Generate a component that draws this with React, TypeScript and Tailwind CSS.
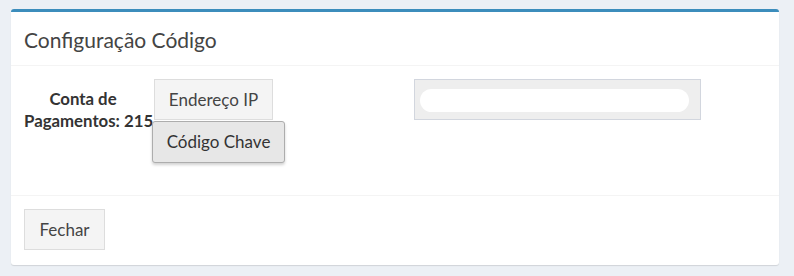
import React from 'react';

export default function App() {
  return (
    <div className="h-[276px] w-[794px] bg-[#ecf0f5] pt-[9px] pl-[11px] font-['Lato',sans-serif]">
      <div className="w-[768px] rounded-[3px] border-t-[3px] border-[#3c8dbc] bg-white shadow-[0_1px_1px_rgba(0,0,0,0.12)]">
        {/* Header */}
        <div className="flex h-[54px] items-center border-b border-[#f4f4f4] px-[13px] pt-px">
          <h3 className="text-[21px] leading-none text-[#444]">Configuração Código</h3>
        </div>

        {/* Body */}
        <div className="flex h-[130px] border-b border-[#f4f4f4] pl-[13px] pt-[13px]">
          <div className="w-[130px] pt-[9px] text-[16.8px] font-bold leading-[22px] text-[#333]">
            <div className="w-[118px] text-center">Conta de</div>
            <div className="whitespace-nowrap">Pagamentos: 215</div>
          </div>
          <div className="relative z-10 flex w-[260px] flex-col items-start">
            <button className="h-[41px] w-[119px] border border-[#ddd] bg-[#f4f4f4] text-[17px] text-[#444]">
              Endereço IP
            </button>
            <button className="-ml-[2px] mt-px h-[42px] w-[133px] rounded-[3px] border border-[#adadad] bg-[#e7e7e7] text-[17px] text-[#333] shadow-[0_2px_3px_rgba(0,0,0,0.18)]">
              Código Chave
            </button>
          </div>
          <div className="flex h-[41px] w-[287px] border border-[#d2d6de] bg-[#eee] pb-[7px] pl-[5px] pr-[11px] pt-[9px]">
            <div className="h-full w-full rounded-full bg-white blur-[0.4px]" />
          </div>
        </div>

        {/* Footer */}
        <div className="h-[69px] px-[13px] pt-[13px]">
          <button className="h-[41px] w-[81px] border border-[#ddd] bg-[#f4f4f4] text-[17px] text-[#444]">
            Fechar
          </button>
        </div>
      </div>
    </div>
  );
}
